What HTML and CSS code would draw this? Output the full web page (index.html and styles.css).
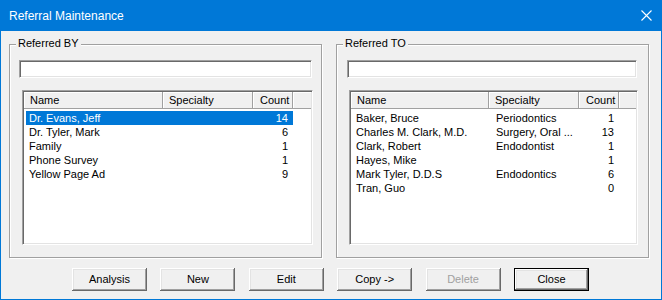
FILE: index.html
```html
<!DOCTYPE html>
<html lang="en">
<head>
    <meta charset="UTF-8">
    <title>Referral Maintenance</title>
    <link rel="stylesheet" href="styles.css">
</head>
<body>
<div class="window">
    <div class="titlebar">
        <span class="title">Referral Maintenance</span>
        <span class="close-x">
            <svg width="11" height="11" viewBox="0 0 11 11"><path d="M0.5 0.5L10.5 10.5M10.5 0.5L0.5 10.5" stroke="#fff" stroke-width="1.1" fill="none"/></svg>
        </span>
    </div>
    <div class="client">
        <div class="groups">
            <div class="group group-by">
                <span class="caption">Referred BY</span>
                <div class="edit"></div>
                <div class="list">
                    <div class="header">
                        <div class="hcell c-name">Name</div>
                        <div class="hcell c-spec">Specialty</div>
                        <div class="hcell c-count">Count</div>
                        <div class="hcell c-rest"></div>
                    </div>
                    <div class="rows">
                        <div class="row selected"><span class="name">Dr. Evans, Jeff</span><span class="spec"></span><span class="count">14</span></div>
                        <div class="row"><span class="name">Dr. Tyler, Mark</span><span class="spec"></span><span class="count">6</span></div>
                        <div class="row"><span class="name">Family</span><span class="spec"></span><span class="count">1</span></div>
                        <div class="row"><span class="name">Phone Survey</span><span class="spec"></span><span class="count">1</span></div>
                        <div class="row"><span class="name">Yellow Page Ad</span><span class="spec"></span><span class="count">9</span></div>
                    </div>
                </div>
            </div>
            <div class="group group-to">
                <span class="caption">Referred TO</span>
                <div class="edit"></div>
                <div class="list">
                    <div class="header">
                        <div class="hcell c-name">Name</div>
                        <div class="hcell c-spec">Specialty</div>
                        <div class="hcell c-count">Count</div>
                        <div class="hcell c-rest"></div>
                    </div>
                    <div class="rows">
                        <div class="row"><span class="name">Baker, Bruce</span><span class="spec">Periodontics</span><span class="count">1</span></div>
                        <div class="row"><span class="name">Charles M. Clark, M.D.</span><span class="spec">Surgery, Oral ...</span><span class="count">13</span></div>
                        <div class="row"><span class="name">Clark, Robert</span><span class="spec">Endodontist</span><span class="count">1</span></div>
                        <div class="row"><span class="name">Hayes, Mike</span><span class="spec"></span><span class="count">1</span></div>
                        <div class="row"><span class="name">Mark Tyler, D.D.S</span><span class="spec">Endodontics</span><span class="count">6</span></div>
                        <div class="row"><span class="name">Tran, Guo</span><span class="spec"></span><span class="count">0</span></div>
                    </div>
                </div>
            </div>
        </div>
        <div class="buttons">
            <div class="btn">Analysis</div>
            <div class="btn">New</div>
            <div class="btn">Edit</div>
            <div class="btn">Copy -&gt;</div>
            <div class="btn disabled">Delete</div>
            <div class="btn default">Close</div>
        </div>
    </div>
</div>
</body>
</html>
```

FILE: styles.css
```css
*{
    margin: 0;
    padding: 0;
    box-sizing: border-box;
}
body{
    background: #f0f0f0;
    font-family: "Liberation Sans", Arial, sans-serif;
    font-size: 11px;
    color: #000;
}
.window{
    width: 662px;
    height: 300px;
    border: 1px solid #0078d7;
    border-top: 0;
    background: #f0f0f0;
}
.titlebar{
    height: 31px;
    margin: 0 -1px;
    background: #0078d7;
    color: #fff;
    display: flex;
    align-items: center;
    justify-content: space-between;
    padding: 0 10px 0 9px;
}
.title{
    font-size: 12px;
}
.close-x{
    display: flex;
    width: 11px;
    height: 11px;
}
.client{
    padding: 13px 0 0 8px;
}
.groups{
    display: flex;
    gap: 14px;
}
.group{
    position: relative;
    width: 313px;
    height: 214px;
    border: 1px solid #a0a0a0;
    box-shadow: 1px 1px 0 #fff, inset 1px 1px 0 #fff;
}
.caption{
    position: absolute;
    left: 6px;
    top: -8px;
    padding: 0 2px;
    line-height: 13px;
    background: #f0f0f0;
}
.edit{
    height: 18px;
    background: #fff;
    border-top: 1px solid #a0a0a0;
    border-left: 1px solid #a0a0a0;
    border-bottom: 1px solid #fff;
    border-right: 1px solid #fff;
    box-shadow: inset 1px 1px 0 #696969, inset -1px -1px 0 #e3e3e3;
}
.group-by .edit{
    margin: 15px 0 0 9px;
    width: 293px;
}
.group-to .edit{
    margin: 15px 0 0 10px;
    width: 290px;
}
.list{
    height: 155px;
    margin-top: 12px;
    background: #fff;
    border-top: 1px solid #a0a0a0;
    border-left: 1px solid #a0a0a0;
    border-bottom: 1px solid #fff;
    border-right: 1px solid #fff;
    box-shadow: inset 1px 1px 0 #696969, inset -1px -1px 0 #e3e3e3;
    padding: 1px;
    overflow: hidden;
}
.group-by .list{
    margin-left: 12px;
    width: 291px;
    --c1: 139px;
}
.group-to .list{
    margin-left: 12px;
    width: 289px;
    --c1: 138px;
}
.header{
    display: flex;
    height: 17px;
}
.hcell{
    background: #f0f0f0;
    border-right: 1px solid #a0a0a0;
    border-bottom: 1px solid #a0a0a0;
    box-shadow: inset 1px 1px 0 #fff;
    line-height: 16px;
    padding-left: 6px;
    white-space: nowrap;
}
.c-name{
    width: var(--c1);
}
.c-spec{
    width: 90px;
}
.c-count{
    width: 40px;
    padding-left: 7px;
}
.c-rest{
    flex: 1;
    border-right: 0;
}
.rows{
    padding: 2px 0 0 2px;
}
.row{
    display: grid;
    grid-template-columns: calc(var(--c1) - 2px) 90px 40px;
    width: fit-content;
    height: 14px;
    line-height: 14px;
    white-space: nowrap;
}
.row span{
    overflow: hidden;
}
.row .name{
    padding-left: 3px;
}
.row .spec{
    padding-left: 7px;
}
.row .count{
    text-align: right;
    padding-right: 5px;
}
.row.selected{
    background: #0078d7;
    color: #fff;
}
.buttons{
    display: flex;
    gap: 13.4px;
    margin-top: 10px;
    padding-left: 63px;
}
.btn{
    width: 75px;
    height: 23px;
    line-height: 22px;
    text-align: center;
    background: #f0f0f0;
    box-shadow: inset -1px -1px 0 #696969, inset 1px 1px 0 #fff, inset -2px -2px 0 #a0a0a0, inset 2px 2px 0 #e3e3e3;
}
.btn.disabled{
    color: #a0a0a0;
}
.btn.default{
    border: 1px solid #000;
    line-height: 20px;
}
```
